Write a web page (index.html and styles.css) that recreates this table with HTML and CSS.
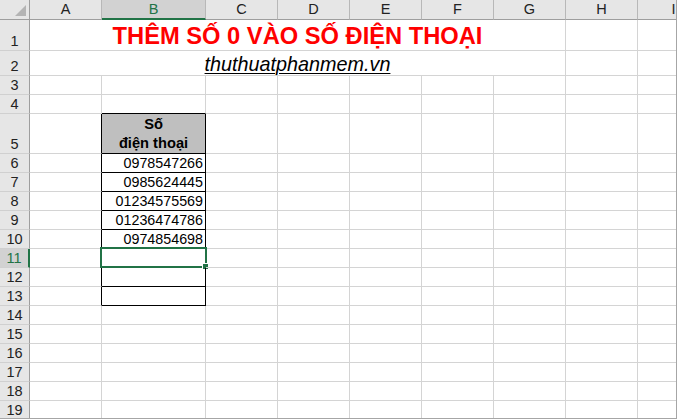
FILE: index.html
```html
<!DOCTYPE html>
<html lang="vi">
<head>
<meta charset="utf-8">
<title>Thêm số 0 vào số điện thoại</title>
<link rel="stylesheet" href="styles.css">
</head>
<body>
<div class="window">
  <div class="sheet">
    <div class="corner"><svg width="30" height="20" viewBox="0 0 30 20"><polygon points="26,5 26,16 15,16" fill="#b4b4b4"/></svg></div>
    <div class="ch">A</div><div class="ch sel">B</div><div class="ch">C</div><div class="ch">D</div><div class="ch">E</div><div class="ch">F</div><div class="ch">G</div><div class="ch">H</div><div class="ch">I</div>

    <div class="rh">1</div><div class="c merge title">THÊM SỐ 0 VÀO SỐ ĐIỆN THOẠI</div><div class="c"></div><div class="c"></div>

    <div class="rh">2</div><div class="c merge site"><span class="link">thuthuatphanmem.vn</span></div><div class="c"></div><div class="c"></div>

    <div class="rh">3</div><div class="c"></div><div class="c"></div><div class="c"></div><div class="c"></div><div class="c"></div><div class="c"></div><div class="c"></div><div class="c"></div><div class="c"></div>

    <div class="rh">4</div><div class="c"></div><div class="c btop"></div><div class="c"></div><div class="c"></div><div class="c"></div><div class="c"></div><div class="c"></div><div class="c"></div><div class="c"></div>

    <div class="rh">5</div><div class="c bl"></div><div class="c box head">Số<br>điện thoại</div><div class="c"></div><div class="c"></div><div class="c"></div><div class="c"></div><div class="c"></div><div class="c"></div><div class="c"></div>

    <div class="rh">6</div><div class="c bl"></div><div class="c box num">0978547266</div><div class="c"></div><div class="c"></div><div class="c"></div><div class="c"></div><div class="c"></div><div class="c"></div><div class="c"></div>

    <div class="rh">7</div><div class="c bl"></div><div class="c box num">0985624445</div><div class="c"></div><div class="c"></div><div class="c"></div><div class="c"></div><div class="c"></div><div class="c"></div><div class="c"></div>

    <div class="rh">8</div><div class="c bl"></div><div class="c box num">01234575569</div><div class="c"></div><div class="c"></div><div class="c"></div><div class="c"></div><div class="c"></div><div class="c"></div><div class="c"></div>

    <div class="rh">9</div><div class="c bl"></div><div class="c box num">01236474786</div><div class="c"></div><div class="c"></div><div class="c"></div><div class="c"></div><div class="c"></div><div class="c"></div><div class="c"></div>

    <div class="rh">10</div><div class="c bl"></div><div class="c box num">0974854698</div><div class="c"></div><div class="c"></div><div class="c"></div><div class="c"></div><div class="c"></div><div class="c"></div><div class="c"></div>

    <div class="rh sel">11</div><div class="c bl"></div><div class="c box active"><span class="selection"><span class="handle"></span></span></div><div class="c"></div><div class="c"></div><div class="c"></div><div class="c"></div><div class="c"></div><div class="c"></div><div class="c"></div>

    <div class="rh">12</div><div class="c bl"></div><div class="c box"></div><div class="c"></div><div class="c"></div><div class="c"></div><div class="c"></div><div class="c"></div><div class="c"></div><div class="c"></div>

    <div class="rh">13</div><div class="c bl"></div><div class="c box"></div><div class="c"></div><div class="c"></div><div class="c"></div><div class="c"></div><div class="c"></div><div class="c"></div><div class="c"></div>

    <div class="rh">14</div><div class="c"></div><div class="c"></div><div class="c"></div><div class="c"></div><div class="c"></div><div class="c"></div><div class="c"></div><div class="c"></div><div class="c"></div>

    <div class="rh">15</div><div class="c"></div><div class="c"></div><div class="c"></div><div class="c"></div><div class="c"></div><div class="c"></div><div class="c"></div><div class="c"></div><div class="c"></div>

    <div class="rh">16</div><div class="c"></div><div class="c"></div><div class="c"></div><div class="c"></div><div class="c"></div><div class="c"></div><div class="c"></div><div class="c"></div><div class="c"></div>

    <div class="rh">17</div><div class="c"></div><div class="c"></div><div class="c"></div><div class="c"></div><div class="c"></div><div class="c"></div><div class="c"></div><div class="c"></div><div class="c"></div>

    <div class="rh">18</div><div class="c"></div><div class="c"></div><div class="c"></div><div class="c"></div><div class="c"></div><div class="c"></div><div class="c"></div><div class="c"></div><div class="c"></div>

    <div class="rh">19</div><div class="c"></div><div class="c"></div><div class="c"></div><div class="c"></div><div class="c"></div><div class="c"></div><div class="c"></div><div class="c"></div><div class="c"></div>
  </div>
</div>
</body>
</html>
```
FILE: styles.css
```css
* { box-sizing: border-box; }

body {
  margin: 0;
  background: #ffffff;
  font-family: "Liberation Sans", Arial, sans-serif;
  color: #000;
}

.window {
  width: 677px;
  height: 419px;
  overflow: hidden;
  border-right: 1px solid #a6a6a6;
  border-bottom: 1px solid #a6a6a6;
}

.sheet {
  display: grid;
  grid-template-columns: 30px 72px 104px repeat(7, 72px);
  grid-template-rows: 20px 31px 25px 19px 19px 40px repeat(14, 19px);
  width: 710px;
}

.corner {
  background: #e6e6e6;
  border-right: 1px solid #9e9e9e;
  border-bottom: 1px solid #9e9e9e;
}
.corner svg { display: block; }

.ch {
  background: #e6e6e6;
  border-right: 1px solid #b8b8b8;
  border-bottom: 1px solid #9e9e9e;
  display: flex;
  align-items: center;
  justify-content: center;
  font-size: 14.5px;
  line-height: 19px;
  color: #222;
}
.ch.sel {
  background: #d2d2d2;
  border-bottom: 2px solid #217346;
  color: #217346;
}

.rh {
  background: #e6e6e6;
  border-right: 1px solid #9e9e9e;
  border-bottom: 1px solid #d0d0d0;
  display: flex;
  align-items: flex-end;
  justify-content: center;
  font-size: 14.5px;
  line-height: 18px;
  color: #222;
}
.rh.sel {
  background: #d2d2d2;
  border-right: 2px solid #217346;
  color: #217346;
}

.c {
  border-right: 1px solid #d4d4d4;
  border-bottom: 1px solid #d4d4d4;
  position: relative;
}

.merge {
  grid-column: span 7;
  display: flex;
  align-items: flex-end;
  justify-content: center;
  white-space: nowrap;
}

.title {
  color: #ff0000;
  font-weight: bold;
  font-size: 23.7px;
  line-height: 27px;
}

.site {
  font-style: italic;
  font-size: 19.8px;
  line-height: 22px;
}
.link { text-decoration: underline; text-decoration-thickness: 1px; text-underline-offset: 2px; }

.btop { border-bottom-color: #000; }
.bl { border-right-color: #000; }
.box { border-right-color: #000; border-bottom-color: #000; }

.head {
  background: #bfbfbf;
  font-weight: bold;
  font-size: 14.67px;
  line-height: 19px;
  display: flex;
  flex-direction: column;
  justify-content: flex-end;
  text-align: center;
}

.num {
  font-size: 14.3px;
  line-height: 18px;
  text-align: right;
  padding-right: 2px;
  white-space: nowrap;
}

.selection {
  position: absolute;
  left: -2px;
  top: -2px;
  width: 107px;
  height: 21px;
  border: 2px solid #217346;
}
.handle {
  position: absolute;
  right: -4px;
  bottom: -4px;
  width: 7px;
  height: 7px;
  background: #217346;
  border: 1px solid #ffffff;
}
```
